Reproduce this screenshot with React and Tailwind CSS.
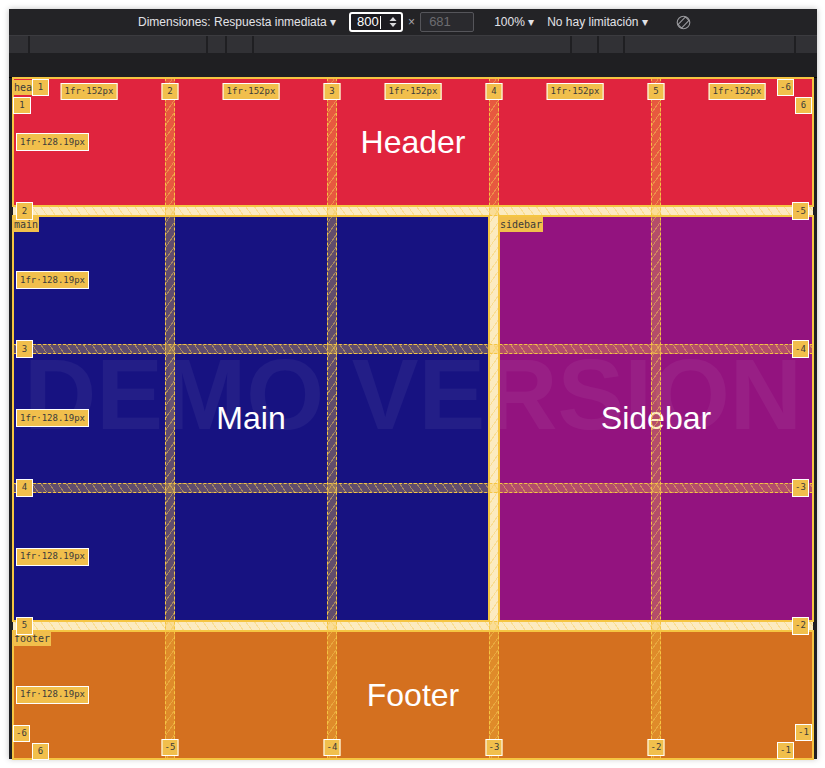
import React from "react";

const COLW = 152;
const ROWH = 128.19;
const GAP = 10;

const colGaps = [0, 1, 2, 3].map((i) => COLW + (COLW + GAP) * i);
const rowGaps = [0, 1, 2, 3].map((j) => ROWH + (ROWH + GAP) * j);
const colCenters = [0, 1, 2, 3, 4].map((i) => COLW / 2 + (COLW + GAP) * i);
const rowCenters = [0, 1, 2, 3, 4].map((j) => ROWH / 2 + (ROWH + GAP) * j);

const areas = [
  { x: 0, y: 0, w: 800, h: ROWH },
  { x: 0, y: ROWH + GAP, w: 476, h: ROWH * 3 + GAP * 2 },
  { x: 486, y: ROWH + GAP, w: 314, h: ROWH * 3 + GAP * 2 },
  { x: 0, y: (ROWH + GAP) * 4, w: 800, h: ROWH },
];

const badge =
  "absolute h-[17px] px-[3px] flex items-center justify-center bg-[#f1bf4c] border border-white text-[9px] text-[#3b3b3b] font-['DejaVu_Sans_Mono',monospace] leading-none whitespace-nowrap";

function Badge({ x, y, children, center = "" }) {
  return (
    <div className={`${badge} ${center}`} style={{ left: x, top: y }}>
      {children}
    </div>
  );
}

function AreaName({ x, y, children, clip }) {
  return (
    <div
      className={
        "absolute h-[15px] px-[1px] flex items-center bg-[#f1bf4c] text-[10px] text-[#3b3b3b] font-['DejaVu_Sans_Mono',monospace] leading-none overflow-hidden whitespace-nowrap " +
        (clip ? "w-[20px]" : "")
      }
      style={{ left: x, top: y }}
    >
      {children}
    </div>
  );
}

function RotateIcon() {
  return (
    <svg width="15" height="15" viewBox="0 0 15 15" fill="none" stroke="#9a9a9e" strokeWidth="1.1">
      <circle cx="7.5" cy="7.5" r="6.3" />
      <rect x="5" y="2.2" width="5" height="10.6" rx="1" transform="rotate(45 7.5 7.5)" />
    </svg>
  );
}

function Spinner() {
  return (
    <svg width="8" height="12" viewBox="0 0 8 12" fill="#d8d8dc">
      <path d="M4 1 L7.5 5 H0.5 Z" />
      <path d="M4 11 L7.5 7 H0.5 Z" />
    </svg>
  );
}

export default function App() {
  return (
    <div className="w-[825px] h-[768px] bg-white pl-[9px] pt-[9px] overflow-hidden font-['Liberation_Sans',Arial,sans-serif]">
      <div className="w-[808px] h-[750px] bg-[#1f1f22] flex flex-col shadow-[0_0_6px_rgba(0,0,0,0.25)]">
        {/* toolbar */}
        <div className="h-[27px] bg-[#232326] border-b border-[#3b3b3f] flex items-center pl-[129px] text-[12px] text-[#e2e2e6]">
          <span>Dimensiones: Respuesta inmediata ▾</span>
          <div className="ml-[13px] w-[54px] h-[20px] border-2 border-white rounded-[3px] bg-[#1c1b20] flex items-center pl-[6px] pr-[4px]">
            <span className="text-white text-[13px]">800</span>
            <span className="w-px h-[13px] bg-white ml-px" />
            <span className="ml-auto flex items-center">
              <Spinner />
            </span>
          </div>
          <span className="mx-[5px] text-[#a8a8ac] text-[12px]">×</span>
          <div className="w-[54px] h-[20px] border border-[#55555a] rounded-[2px] bg-[#2a2a2e] flex items-center pl-[8px] text-[13px] text-[#6c6c70]">
            681
          </div>
          <span className="ml-[20px]">100% ▾</span>
          <span className="ml-[13px]">No hay limitación ▾</span>
          <span className="ml-[28px] flex items-center">
            <RotateIcon />
          </span>
        </div>

        {/* ruler */}
        <div className="h-[17px] bg-[#313135] flex">
          <div className="w-[21px] border-r-2 border-[#1f1f22]" />
          <div className="w-[178px] border-r-2 border-[#1f1f22]" />
          <div className="w-[19px] border-r-2 border-[#1f1f22]" />
          <div className="w-[27px] border-r-2 border-[#1f1f22]" />
          <div className="w-[318px] border-r-2 border-[#1f1f22]" />
          <div className="w-[27px] border-r-2 border-[#1f1f22]" />
          <div className="w-[26px] border-r-2 border-[#1f1f22]" />
          <div className="w-[171px] border-r-2 border-[#1f1f22]" />
          <div className="flex-1" />
        </div>

        <div className="h-[25px] border-b border-black" />

        {/* viewport */}
        <div className="px-[4px]">
          <div className="relative w-[800px] h-[681px] bg-white grid grid-cols-5 grid-rows-5 gap-[10px] text-white text-[32px]">
            <div className="col-span-5 bg-[#e0243e] flex items-center justify-center">Header</div>
            <div className="col-span-3 row-span-3 bg-[#171281] flex items-center justify-center">Main</div>
            <div className="col-span-2 row-span-3 bg-[#93137f] flex items-center justify-center">Sidebar</div>
            <div className="col-span-5 bg-[#d4701f] flex items-center justify-center">Footer</div>

            {/* watermark */}
            <div className="absolute left-0 right-0 top-[266px] text-center text-[100px] leading-none font-bold text-white/[0.05] pointer-events-none whitespace-nowrap">
              DEMO VERSION
            </div>

            {/* grid inspector overlay */}
            <div className="absolute inset-0 pointer-events-none">
              {colGaps.map((x) => (
                <div
                  key={"c" + x}
                  className="absolute top-0 bottom-0 w-[10px] border-x border-dashed border-[#f5c542] bg-[#f5c24255] bg-[repeating-linear-gradient(-55deg,transparent_0px,transparent_6px,rgba(247,205,90,0.45)_6px,rgba(247,205,90,0.45)_7px)]"
                  style={{ left: x }}
                />
              ))}
              {rowGaps.map((y) => (
                <div
                  key={"r" + y}
                  className="absolute left-0 right-0 h-[10px] border-y border-dashed border-[#f5c542] bg-[#f5c24255] bg-[repeating-linear-gradient(55deg,transparent_0px,transparent_6px,rgba(247,205,90,0.45)_6px,rgba(247,205,90,0.45)_7px)]"
                  style={{ top: y }}
                />
              ))}
              {areas.map((a, i) => (
                <div
                  key={"a" + i}
                  className="absolute border-2 border-[#f5c542]"
                  style={{ left: a.x - 1, top: a.y - 1, width: a.w + 2, height: a.h + 2 }}
                />
              ))}

              <AreaName x={0} y={2} clip>header</AreaName>
              <AreaName x={0} y={139}>main</AreaName>
              <AreaName x={486} y={139}>sidebar</AreaName>
              <AreaName x={0} y={553}>footer</AreaName>

              {colCenters.map((x) => (
                <Badge key={"cw" + x} x={x} y={5} center="-translate-x-1/2">1fr·152px</Badge>
              ))}
              {colGaps.map((x, i) => (
                <Badge key={"tn" + x} x={x + 5} y={5} center="-translate-x-1/2 w-[17px]">{i + 2}</Badge>
              ))}
              {colGaps.map((x, i) => (
                <Badge key={"bn" + x} x={x + 5} y={661} center="-translate-x-1/2 w-[17px]">{-5 + i}</Badge>
              ))}
              {rowCenters.map((y) => (
                <Badge key={"rh" + y} x={3} y={y} center="-translate-y-1/2 h-[18px]">1fr·128.19px</Badge>
              ))}
              {rowGaps.map((y, j) => (
                <Badge key={"ln" + y} x={3} y={y + 5} center="-translate-y-1/2 w-[17px] h-[18px]">{j + 2}</Badge>
              ))}
              {rowGaps.map((y, j) => (
                <Badge key={"rn" + y} x={779} y={y + 5} center="-translate-y-1/2 w-[17px] h-[18px]">{-5 + j}</Badge>
              ))}

              <Badge x={19} y={1} center="w-[17px]">1</Badge>
              <Badge x={0} y={19} center="w-[18px]">1</Badge>
              <Badge x={764} y={1} center="w-[17px]">-6</Badge>
              <Badge x={782} y={19} center="w-[17px]">6</Badge>
              <Badge x={0} y={647} center="w-[17px]">-6</Badge>
              <Badge x={19} y={665} center="w-[17px]">6</Badge>
              <Badge x={782} y={646} center="w-[17px]">-1</Badge>
              <Badge x={764} y={664} center="w-[17px]">-1</Badge>
            </div>
          </div>
        </div>
      </div>
    </div>
  );
}
